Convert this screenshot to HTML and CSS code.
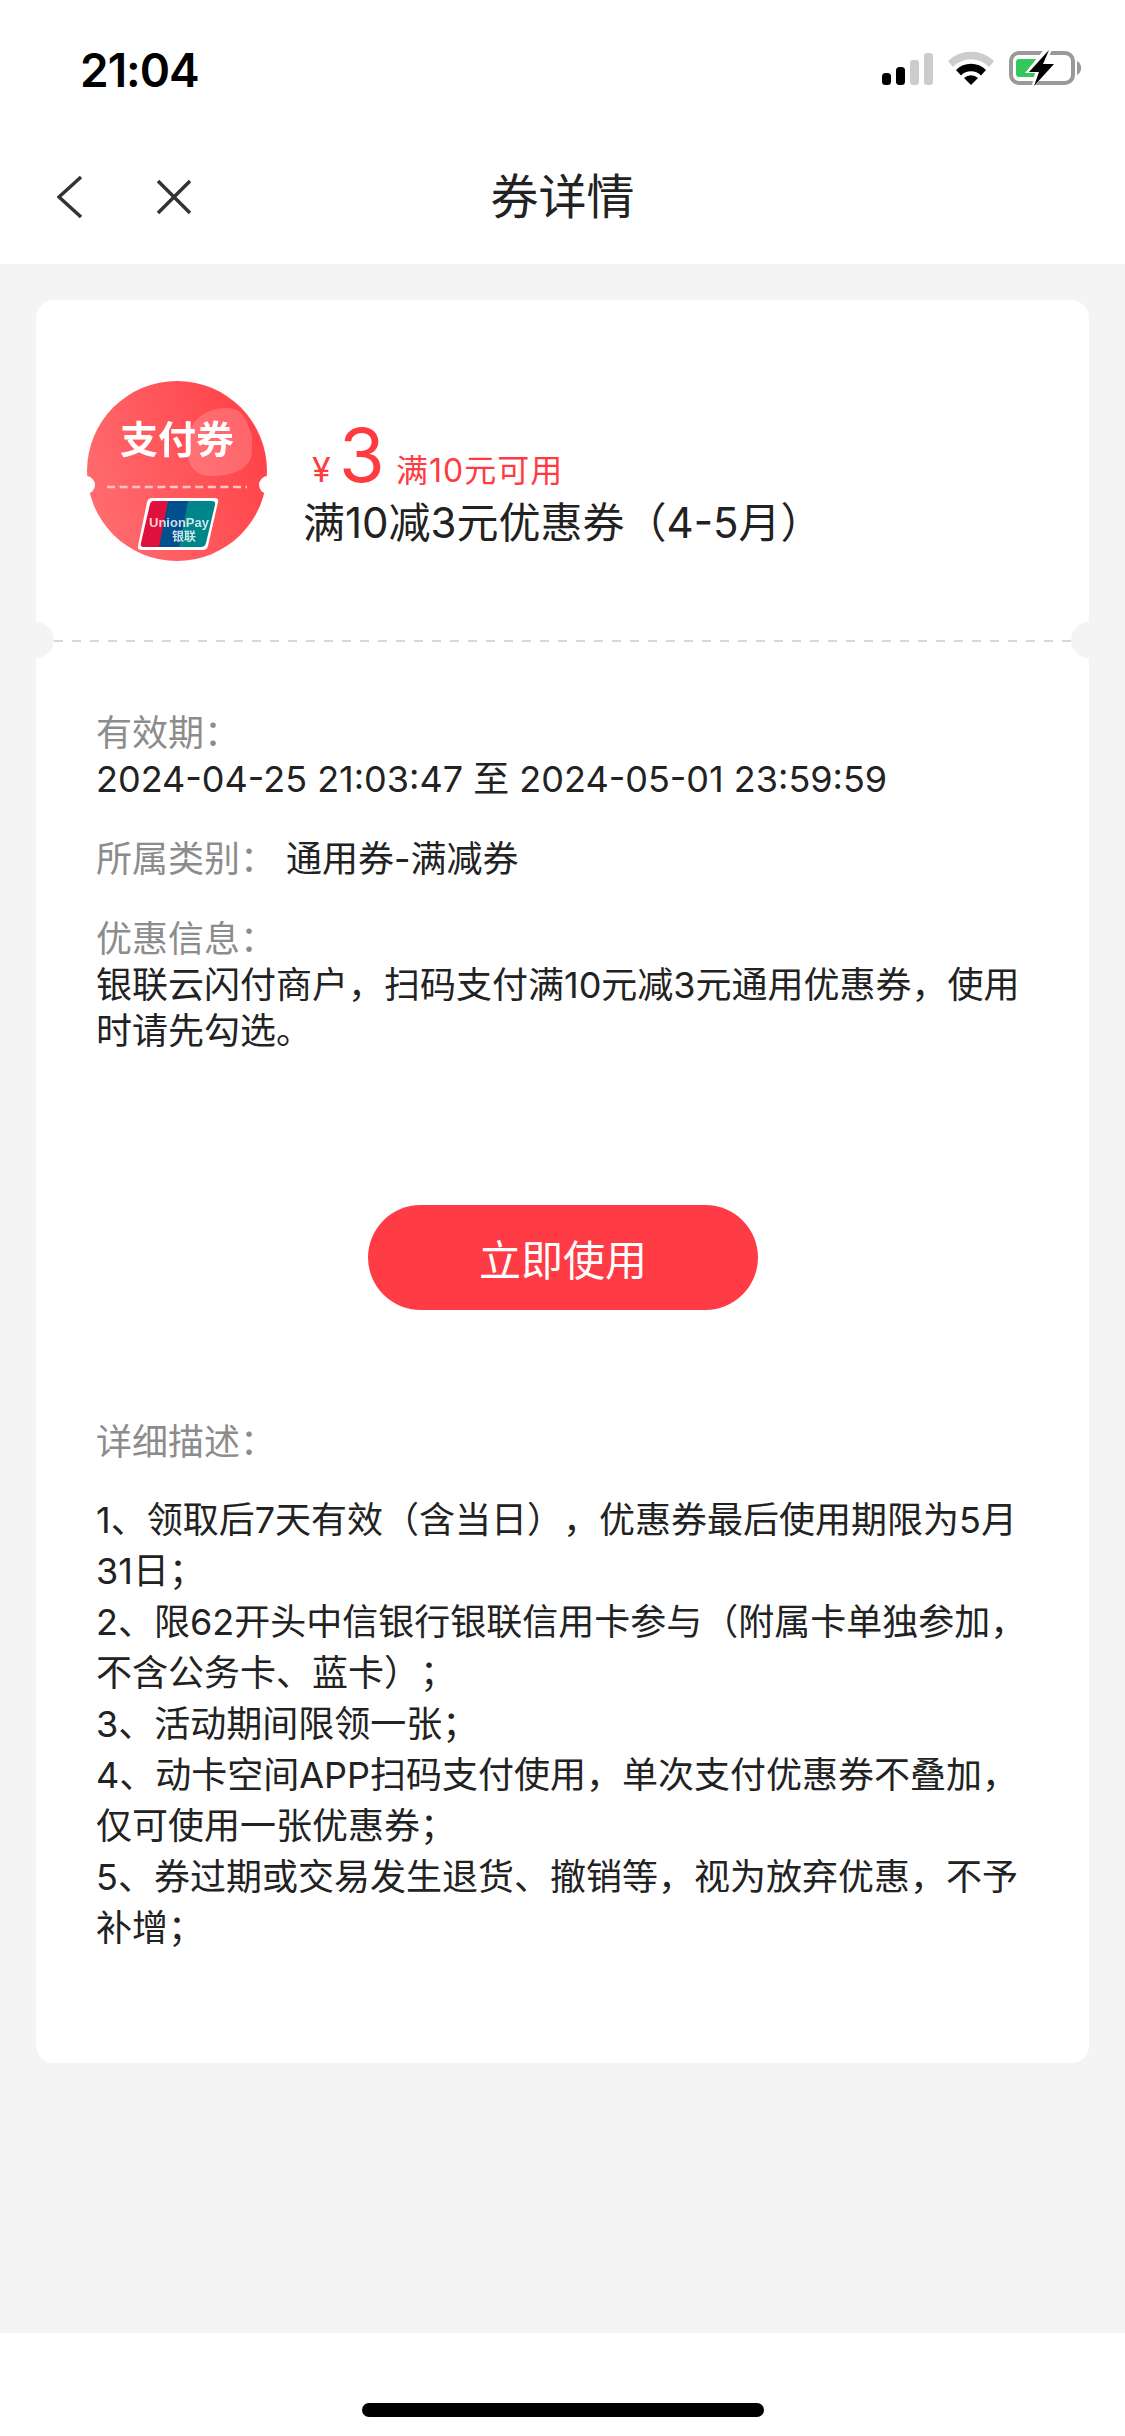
FILE: index.html
```html
<!DOCTYPE html>
<html lang="zh-CN">
<head>
    <meta charset="UTF-8">
    <meta name="viewport" content="width=device-width, initial-scale=1.0">
    <title>券详情</title>
    <link rel="stylesheet" href="styles.css">
</head>
<body>
    <div class="status-bar">
        <div class="time">21:04</div>
        <div class="status-icons">
            <svg class="signal" width="51" height="32" viewBox="0 0 51 32">
                <rect x="0" y="20" width="9" height="12" rx="3.5" fill="#000"/>
                <rect x="14" y="14" width="9" height="18" rx="3.5" fill="#000"/>
                <rect x="28" y="7" width="9" height="25" rx="3" fill="#ccc"/>
                <rect x="42" y="0" width="9" height="32" rx="3" fill="#ccc"/>
            </svg>
            <svg class="wifi" width="46" height="34" viewBox="0 0 46 34">
                <path d="M0 10 A33 33 0 0 1 46 10 L41 16 A25 25 0 0 0 5 16 Z" fill="#ccc"/>
                <path d="M8 19 A21 21 0 0 1 38 19 L33 24.500 A14 14 0 0 0 13 24.500 Z" fill="#000"/>
                <path d="M16 27 A10 10 0 0 1 30 27 L23 34 Z" fill="#000"/>
            </svg>
            <svg class="battery" width="73" height="36" viewBox="0 0 73 36">
                <rect x="2" y="3" width="62" height="30" rx="8" fill="#fff" stroke="#999" stroke-width="4"/>
                <path d="M68 11 A8 8 0 0 1 68 25 Z" fill="#999"/>
                <path d="M10 9 H30 V27 H10 Q7 27 7 24 V12 Q7 9 10 9 Z" fill="#34c759"/>
                <path d="M37 -3 L16 23 H26 L22 39 L49 12 H38 L44 -3 Z" fill="#fff"/>
                <path d="M40 0 L20 22 H30 L25 36 L45 14 H34 Z" fill="#000"/>
            </svg>
        </div>
    </div>

    <div class="nav-bar">
        <div class="nav-icons">
            <svg width="26" height="44" viewBox="0 0 26 44"><path d="M24 2 L2 22 L24 42" fill="none" stroke="#333" stroke-width="3.500"/></svg>
            <svg width="36" height="36" viewBox="0 0 36 36"><path d="M2 2 L34 34 M34 2 L2 34" fill="none" stroke="#333" stroke-width="3.500"/></svg>
        </div>
        <div class="nav-title">券详情</div>
    </div>

    <div class="card">
        <div class="coupon-head">
            <svg class="badge" width="180" height="180" viewBox="0 0 180 180">
                <defs>
                    <linearGradient id="badge-red" x1="0" y1="0.700" x2="1" y2="0.300">
                        <stop offset="0" stop-color="#ff6d70"/>
                        <stop offset="1" stop-color="#ff4147"/>
                    </linearGradient>
                </defs>
                <circle cx="90" cy="90" r="90" fill="url(#badge-red)"/>
                <path d="M100 66 C100 38 120 27 140 27 C158 27 160 42 165 55 V70 C165 85 150 95 125 95 C108 95 100 85 100 66 Z" fill="#fff" fill-opacity="0.180"/>
                <text x="90" y="72" class="badge-text">支付券</text>
                <circle cx="-1" cy="104" r="9" fill="#fff"/>
                <circle cx="181" cy="104" r="9" fill="#fff"/>
                <path d="M20 106 H160" stroke="#ffc4c4" stroke-width="2.500" stroke-dasharray="8 4.600"/>
                <path d="M65 117 H128 Q132 117 131 121 L121 165 Q120 169 116 169 H55 Q50 169 51 165 L60 121 Q61 117 65 117 Z" fill="#fff"/>
                <path d="M66 120 H83 L74 166 H57 Q53 166 54 162 L63 123 Q64 120 66 120 Z" fill="#e0103c"/>
                <path d="M81 120 H103 L94 166 H72 Z" fill="#004f8f"/>
                <path d="M101 120 H125 Q129 120 128 124 L119 162 Q118 166 114 166 H92 Z" fill="#00868a"/>
                <text x="92" y="146" class="up-text">UnionPay</text>
                <text x="97" y="160" class="up-text-cn">银联</text>
            </svg>
            <div class="coupon-info">
                <div class="amount-row">
                    <span class="yen">¥</span>
                    <span class="amount">3</span>
                    <span class="limit">满10元可用</span>
                </div>
                <div class="coupon-name">满10减3元优惠券&#xFF08;4-5月&#xFF09;</div>
            </div>
        </div>

        <div class="tear-line">
            <span class="notch notch-left"></span>
            <span class="notch notch-right"></span>
        </div>

        <div class="coupon-body">
            <div class="block">
                <div class="label">有效期&#xFF1A;</div>
                <div>2024-04-25 21:03:47 至 2024-05-01 23:59:59</div>
            </div>
            <div class="block type-row">
                <div class="label">所属类别&#xFF1A;</div>
                <div>通用券-满减券</div>
            </div>
            <div class="block info-block">
                <div class="label">优惠信息&#xFF1A;</div>
                <div>银联云闪付商户&#xFF0C;扫码支付满10元减3元通用优惠券&#xFF0C;使用时请先勾选。</div>
            </div>

            <button class="use-btn">立即使用</button>

            <div class="label">详细描述&#xFF1A;</div>
            <div class="rules">
                <div>1、领取后7天有效&#xFF08;含当日&#xFF09;&#xFF0C;优惠券最后使用期限为5月31日&#xFF1B;</div>
                <div>2、限62开头中信银行银联信用卡参与&#xFF08;附属卡单独参加&#xFF0C;不含公务卡、蓝卡&#xFF09;&#xFF1B;</div>
                <div>3、活动期间限领一张&#xFF1B;</div>
                <div>4、动卡空间APP扫码支付使用&#xFF0C;单次支付优惠券不叠加&#xFF0C;仅可使用一张优惠券&#xFF1B;</div>
                <div>5、券过期或交易发生退货、撤销等&#xFF0C;视为放弃优惠&#xFF0C;不予补增&#xFF1B;</div>
            </div>
        </div>
    </div>

    <div class="home-bar"><div class="home-indicator"></div></div>
</body>
</html>
```

FILE: styles.css
```css
* {box-sizing:border-box}
body {margin:0; width:1125px; height:2436px; display:flex; flex-direction:column; background:#f4f4f4; color:#222; font-family:Inter,"Noto Sans CJK SC",sans-serif; font-size:36px; line-height:46px; text-spacing-trim:space-all}

.status-bar {height:130px; padding:48px 43px 0 80px; background:#fff; display:flex; justify-content:space-between; align-items:flex-start}
.time {font-family:Inter,sans-serif; font-weight:600; font-size:46px; line-height:44px; color:#000; letter-spacing:-1px}
.status-icons {display:flex; align-items:flex-end; gap:15px; margin-top:2px}
.status-icons .battery {margin-bottom:-1px}

.nav-bar {height:134px; background:#fff; position:relative; display:flex; align-items:center; justify-content:center}
.nav-icons {position:absolute; left:57px; top:45px; display:flex; align-items:center; gap:73px}
.nav-title {font-size:48px; color:#222}

.card {margin:36px 36px 0; height:1763px; background:#fff; border-radius:18px}
.coupon-head {height:340px; padding:81px 0 0 51px; display:flex; gap:36px}
.coupon-info {padding-top:31px}
.amount-row {display:flex; align-items:baseline; color:#ff3b41; height:86px; padding-left:9px}
.yen {font-size:34px; width:27px}
.amount {font-size:74px; line-height:86px; width:57px}
.limit {font-size:32px; letter-spacing:1px}
.coupon-name {font-size:42px; line-height:50px; color:#222}

.badge {flex:none; filter:blur(0.5px)}
.badge-text {font-size:38px; font-weight:700; fill:#fff; text-anchor:middle; font-family:"Noto Sans CJK SC",sans-serif}
.up-text {font-size:13px; font-weight:700; fill:#fff; fill-opacity:0.800; text-anchor:middle; font-family:"Liberation Sans",sans-serif}
.up-text-cn {font-size:12px; font-weight:700; fill:#fff; fill-opacity:0.800; text-anchor:middle; font-family:"Noto Sans CJK SC",sans-serif}

.tear-line {height:2px; margin:0 18px; position:relative; background:repeating-linear-gradient(90deg, #d8d8d8 0 9px, transparent 9px 18px)}
.notch {position:absolute; top:-18px; width:36px; height:36px; border-radius:50%; background:#f4f4f4}
.notch-left {left:-36px}
.notch-right {right:-36px}

.coupon-body {padding:68px 62px 0 60px}
.block {margin-bottom:34px}
.info-block {margin-bottom:0}
.label {color:#8c8c8c}
.type-row {display:flex; gap:10px}

.use-btn {display:block; width:390px; height:105px; margin:151px 0 109px 272px; border:none; border-radius:53px; background:#ff3b45; color:#fff; font-family:inherit; font-size:42px}
.rules {margin-top:30px; line-height:51px}

.home-bar {flex:1; margin-top:270px; background:#fff; display:flex; justify-content:center; padding-top:70px}
.home-indicator {width:402px; height:14px; border-radius:7px; background:#000}
```
